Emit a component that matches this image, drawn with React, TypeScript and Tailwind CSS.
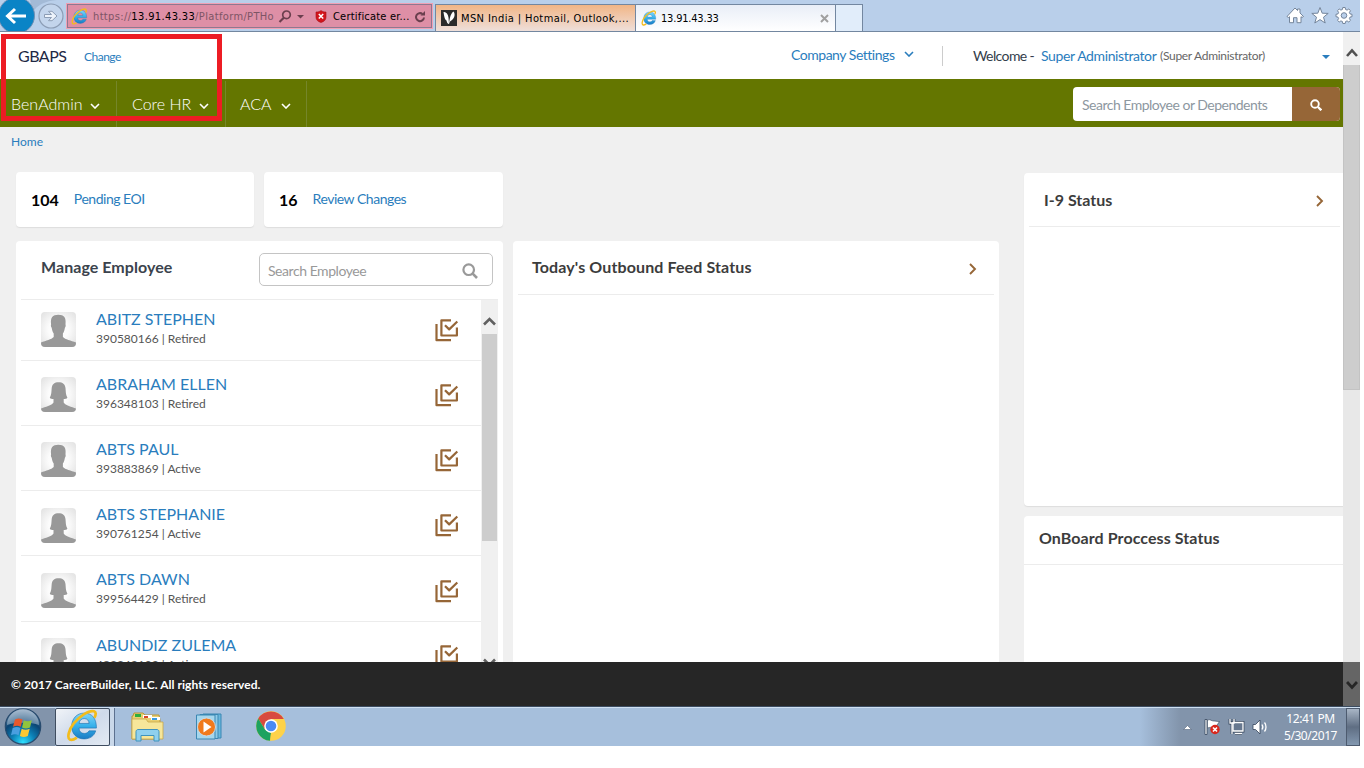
import React from 'react';

interface Employee {
  name: string;
  id: string;
  status: string;
  female: boolean;
}

const employees: Employee[] = [
  { name: 'ABITZ STEPHEN', id: '390580166', status: 'Retired', female: false },
  { name: 'ABRAHAM ELLEN', id: '396348103', status: 'Retired', female: true },
  { name: 'ABTS PAUL', id: '393883869', status: 'Active', female: false },
  { name: 'ABTS STEPHANIE', id: '390761254', status: 'Active', female: true },
  { name: 'ABTS DAWN', id: '399564429', status: 'Retired', female: true },
  { name: 'ABUNDIZ ZULEMA', id: '483242192', status: 'Active', female: true },
];

interface ChevronProps {
  className?: string;
  d?: string;
  width?: number;
  height?: number;
  strokeWidth?: number;
}

const Chevron: React.FC<ChevronProps> = ({ className = '', d = 'M1 1l4 4 4-4', width = 10, height = 6, strokeWidth = 1.6 }) => (
  <svg className={`shrink-0 ${className}`} width={width} height={height} viewBox={`0 0 ${width} ${height}`} fill="none" stroke="currentColor" strokeWidth={strokeWidth}>
    <path d={d} />
  </svg>
);

const IeLogo: React.FC<{ size: number; className?: string; id: string }> = ({ size, className, id }) => (
  <svg className={className} width={size} height={size} viewBox="0 0 32 32" fill="none">
    <defs>
      <linearGradient id={id} x1="0" y1="0" x2="0" y2="1">
        <stop offset="0" stopColor="#7fd6fa" />
        <stop offset="0.5" stopColor="#35b0ea" />
        <stop offset="1" stopColor="#1b7cc4" />
      </linearGradient>
    </defs>
    <path
      d="M29.5 18.5H12.6c.2 3.6 2.2 5.2 5.1 5.2 2.200 0 3.700-.8 4.600-2.500h6.500c-1.500 5-5.600 7.800-11.200 7.800C10.300 29 5.500 24 5.500 16.900 5.500 9.400 10.400 4 17.600 4c7.700 0 12 5.200 11.900 14.500ZM12.700 14h9.700c-.2-3-1.900-4.700-4.700-4.700-2.900 0-4.600 1.700-5 4.700Z"
      fill={`url(#${id})`}
      stroke="#1a6fb0"
      strokeWidth="0.6"
    />
    <path d="M27.500 8.500c1.800-3 1.800-5.500-.4-6.300C22.500.8 13 7 7.500 14 2.500 20.500.800 28 3.800 29.700c1.700.8 4.200-.2 6.700-2" stroke="#f3bc1c" strokeWidth="2.600" />
  </svg>
);

const BrowserBar = () => (
  <div className="h-8 flex bg-[#b9cfea] border-b border-[#7387a0] font-['DejaVu_Sans_Condensed','DejaVu_Sans',sans-serif] text-[11px] text-black overflow-hidden shrink-0">
    <svg width="67" height="31" viewBox="0 0 67 31" className="shrink-0">
      <path d="M30 0h27c-12 1-20 5-24 12z" fill="#a3bad6" />
      <circle cx="16.500" cy="15.500" r="18" fill="#0a84c6" stroke="#6f8fb3" />
      <path d="M26 16H8M15 9l-7.500 7 7.500 7" fill="none" stroke="#fff" strokeWidth="3" />
      <circle cx="51" cy="16" r="12" fill="#c3d5ec" stroke="#8c9db5" strokeWidth="1.200" />
      <path d="M44.500 14.500h7l-3-3.200h3.500l5 4.700-5 4.700h-3.500l3-3.200h-7z" fill="#edf3fb" stroke="#8c9db5" strokeWidth="1" />
    </svg>
    <div className="mt-1 w-[365px] h-6 shrink-0 flex items-center bg-[#de8fa6] border border-[#8f7890] outline-1 outline-[#f0a0b4] pl-[3px] pt-px">
      <IeLogo size={17} id="ieAddress" />
      <span className="ml-[5px] pt-px w-[182px] whitespace-nowrap text-[#7d5565] tracking-[0.36px]">
        https://<span className="text-black">13.91.43.33</span>/Platform/PTHo
      </span>
      <svg width="27" height="13" viewBox="0 0 27 13" className="ml-[3px] shrink-0" fill="none">
        <circle cx="8.500" cy="4.800" r="3.800" stroke="#6b3f4e" strokeWidth="1.700" />
        <path d="M5.800 7.800L1.500 12" stroke="#6b3f4e" strokeWidth="2.200" />
        <path d="M19 5h7l-3.500 3.500z" fill="#6b3f4e" />
      </svg>
      <svg width="12" height="13" viewBox="0 0 12 13" className="ml-[10px] shrink-0">
        <path d="M1 2c2 0 4-.5 5-1.500C7 1.500 9 2 11 2v5c0 3-2 4.500-5 5.500C3 11.500 1 10 1 7z" fill="#d3141c" stroke="#a50d14" strokeWidth=".6" />
        <path d="M3.800 4l4.400 4.600M8.200 4L3.800 8.600" stroke="#fff" strokeWidth="1.500" />
      </svg>
      <span className="ml-[6px] pt-px whitespace-nowrap tracking-[0.2px] w-[78px]">Certificate er...</span>
      <svg width="12" height="12" viewBox="0 0 12 12" fill="none" className="ml-[3px] shrink-0">
        <path d="M8.500 3A4 4 0 1 0 10 6.500" stroke="#6b3f4e" strokeWidth="2" />
        <path d="M6.500 4.500H11V0z" fill="#6b3f4e" />
      </svg>
    </div>
    <div className="mt-1 ml-[3px] w-[201px] h-[27px] shrink-0 flex items-center border border-b-0 border-[#7387a0] bg-linear-to-b from-[#f1b585] to-[#eedfda] pl-[5px]">
      <svg width="16" height="16" viewBox="0 0 16 16" className="shrink-0">
        <rect width="16" height="16" fill="#2b2b2b" />
        <path d="M2.500 2c2.500-.5 4.500 2 5 5.500l.5 6.500c-1.500 0-2-1.500-2.500-3.500C3.500 9.500 3 5 2.500 2z" fill="#fff" />
        <path d="M12.500 1.500c2.500 3 .5 8-3.500 10L8 14c.5-4 1-10 4.500-12.500z" fill="#fff" />
      </svg>
      <span className="ml-1 pt-0.5 whitespace-nowrap tracking-[0.4px]">MSN India | Hotmail, Outlook,...</span>
    </div>
    <div className="mt-1 w-[200px] h-[27px] shrink-0 flex items-center border-t border-r border-[#7387a0] bg-linear-to-b from-[#e9eef7] to-white pl-[5px] pr-[6px]">
      <IeLogo size={16} id="ieTab" />
      <span className="ml-1 pt-0.5 flex-1 tracking-[-0.2px]">13.91.43.33</span>
      <svg width="9" height="9" viewBox="0 0 9 9">
        <path d="M1 1l7 7M8 1L1 8" stroke="#a0a0a0" strokeWidth="2" />
      </svg>
    </div>
    <div className="mt-1 w-[27px] h-[27px] shrink-0 border-t border-r border-[#7387a0] bg-[#e1edfa]" />
    <svg width="70" height="20" viewBox="0 0 70 20" className="ml-auto mt-[6px] mr-[5px] shrink-0" fill="#fff" stroke="#74859b" strokeWidth="1">
      <path d="M2 10.500L10 2l2.500 2.500V3h2.500v4l3.500 3.500-1.500 1-1-.8v6h-4v-5H8.500v5h-4v-6l-1 .8z" />
      <path d="M35 1.500l2.200 5.700 6 .2-4.700 3.800 1.700 5.800-5.200-3.400-5.200 3.400 1.700-5.800-4.700-3.800 6-.2z" />
      <path d="M57.800 1.500h2.400l.4 2 1.500.6 1.700-1.100 1.700 1.700-1.100 1.700.6 1.500 2 .4v2.400l-2 .4-.6 1.500 1.100 1.700-1.700 1.700-1.700-1.100-1.500.6-.4 2h-2.400l-.4-2-1.500-.6-1.700 1.100-1.700-1.700 1.100-1.700-.6-1.500-2-.4V8.300l2-.4.600-1.500-1.100-1.700 1.700-1.700 1.700 1.100 1.500-.6z" />
      <circle cx="59" cy="9.500" r="2.800" fill="#b9cfea" />
    </svg>
  </div>
);

const TopHeader = () => (
  <div className="h-[47px] shrink-0 flex items-center bg-white text-sm whitespace-nowrap">
    <span className="ml-[18px] w-[66px] text-base text-[#1e2845] tracking-[-0.5px]">GBAPS</span>
    <span className="text-xs text-[#2a7dbd] pt-[3px] tracking-[-0.5px]">Change</span>
    <div className="ml-auto flex items-center">
      <span className="w-[104px] text-[#2a7dbd] tracking-[-0.47px] -mt-0.5">Company Settings</span>
      <Chevron className="ml-[9px] -mt-1 text-[#2a7dbd]" />
      <div className="ml-7 w-px h-5 bg-[#ccc]" />
      <span className="ml-[30px] w-[68px] text-[#333d4b] tracking-[-0.6px]">Welcome -</span>
      <span className="w-[119px] text-[#2a7dbd] tracking-[-0.38px]">Super Administrator</span>
      <span className="w-[162px] text-xs text-[#666] pt-px tracking-[-0.3px]">(Super Administrator)</span>
      <svg width="8" height="4" viewBox="0 0 8 4" className="mr-[13px] mt-0.5">
        <path d="M0 0h8L4 4z" fill="#2a7dbd" />
      </svg>
    </div>
  </div>
);

const MainNav = () => (
  <div className="h-12 shrink-0 flex items-center bg-[#647600] text-white">
    <div className="flex pt-0.5 h-full text-base font-light">
      <div className="w-[117px] pl-[11px] flex items-center gap-[7px] border-r border-[#75862a]">
        <span className="w-[72px]">BenAdmin</span>
        <Chevron className="mt-1" />
      </div>
      <div className="w-[109px] pl-[15px] flex items-center gap-[7px] border-r border-[#75862a]">
        <span className="w-[60px] whitespace-nowrap">Core HR</span>
        <Chevron className="mt-1" />
      </div>
      <div className="w-[81px] pl-[14px] flex items-center gap-[8px] border-r border-[#75862a]">
        <span className="w-[33px]">ACA</span>
        <Chevron className="mt-1" />
      </div>
    </div>
    <div className="ml-auto mr-[3px] mt-[2px] h-[34px] w-[267px] flex rounded-sm overflow-hidden bg-white">
      <span className="flex-1 pl-[9px] pt-[1px] leading-[34px] text-sm text-[#8d979f] whitespace-nowrap tracking-[-0.5px]">Search Employee or Dependents</span>
      <div className="w-12 bg-[#966637] flex items-center justify-center">
        <svg width="12" height="12" viewBox="0 0 12 12" fill="none" stroke="#fff" className="mt-0.5">
          <circle cx="5" cy="5" r="3.800" strokeWidth="1.900" />
          <path d="M8 8l3.300 3.300" strokeWidth="2.300" />
        </svg>
      </div>
    </div>
  </div>
);

const Avatar: React.FC<{ female: boolean }> = ({ female }) => (
  <div className="w-[35px] h-[35px] rounded-sm overflow-hidden bg-radial from-[#fcfcfc] from-40% to-[#e0e0e0]">
    <svg width="35" height="35" viewBox="0 0 35 35" fill="#999">
      {female ? (
        <path d="M0 35v-3.500C4 30 11 28.500 12.500 25.500V22c-1.500 0-3-.3-3.700-1.300 1.900-3.200 1.500-6.200 1.900-9.700C11.100 7 13.500 5.200 17.600 5.200s6.500 1.800 6.900 5.800c.4 3.500 0 6.500 1.900 9.700-.7 1-2.200 1.300-3.700 1.300v3.500C24.200 28.500 31 30 35 31.500V35z" />
      ) : (
        <path d="M0 35v-4.500c5-2 10.500-3 12.700-5.500v-3.500c-1.200-1.700-1.700-3.700-2-5.800-.8-.5-1-2-.6-3.400C9.300 5.500 11.500 2.700 17.300 2.700s8 2.800 7.200 9.600c.4 1.400.2 2.900-.6 3.400-.3 2-.8 4.100-2 5.800V25c2.200 2.500 8.100 3.500 13.100 5.500V35z" />
      )}
    </svg>
  </div>
);

const ChecklistIcon = () => (
  <svg width="24" height="23" viewBox="0 0 24 23" fill="none" stroke="#966637" strokeWidth="2.200" strokeLinejoin="round">
    <path d="M1.500 5v16.200H16" />
    <path d="M16 1.300H6.400v15.200h15.500V8.500" />
    <path d="M10 6.200l4.200 4.200L22.300 2.500" />
  </svg>
);

const EmployeeRow: React.FC<{ employee: Employee }> = ({ employee }) => (
  <div className="h-[65.2px] flex border-b border-[#ececec] pl-5 shrink-0">
    <div className="pt-[16.500px]">
      <Avatar female={employee.female} />
    </div>
    <div className="ml-5 pt-[13px] flex-1 whitespace-nowrap">
      <div className="text-base leading-5 text-[#2a7dbd]">{employee.name}</div>
      <div className="text-xs leading-5 text-[#555]">
        {employee.id} | {employee.status}
      </div>
    </div>
    <div className="pt-[23.300px] pr-[22px]">
      <ChecklistIcon />
    </div>
  </div>
);

const StatCard: React.FC<{ count: string; label: string; className: string }> = ({ count, label, className }) => (
  <div className={`h-[55px] bg-white rounded-sm shadow-[0_1px_1px_#ddd] flex items-center pl-[15px] ${className}`}>
    <span className="text-base font-bold text-black">{count}</span>
    <span className="ml-[15px] -mt-0.5 text-sm text-[#2a7dbd] tracking-[-0.48px]">{label}</span>
  </div>
);

const ManageEmployee = () => (
  <div className="w-[487px] bg-white rounded-t-sm px-[5px] flex flex-col overflow-hidden">
    <div className="h-[59px] shrink-0 flex border-b border-[#ececec] pl-5">
      <span className="pt-[14px] w-[218px] leading-6 text-base font-bold text-[#3b434d] tracking-[0.05px]">Manage Employee</span>
      <div className="mt-3 w-[234px] h-[33px] border border-[#c4c4c4] rounded-[5px] flex items-center pl-2 text-sm text-[#999]">
        <span className="flex-1 pt-[2px] tracking-[-0.45px]">Search Employee</span>
        <svg width="16" height="16" viewBox="0 0 16 16" fill="none" stroke="#999" className="mr-[14px] mt-[2px]">
          <circle cx="6.700" cy="6.700" r="5.300" strokeWidth="2.200" />
          <path d="M10.700 10.700l4.300 4.300" strokeWidth="2.600" />
        </svg>
      </div>
    </div>
    <div className="flex-1 flex min-h-0">
      <div className="flex-1 overflow-hidden">
        <div className="-mt-[4.400px] flex flex-col">
          {employees.map((employee) => (
            <EmployeeRow key={employee.id} employee={employee} />
          ))}
        </div>
      </div>
      <div className="w-[17px] bg-[#f0f0f0] flex flex-col items-center text-[#606060] pt-[17px] overflow-hidden">
        <Chevron width={13} height={9} d="M1 7.500l5.500-5.500L12 7.500" strokeWidth={2.6} />
        <div className="mt-[8px] w-[15px] h-[207px] shrink-0 bg-[#cdcdcd]" />
        <Chevron className="mt-[117px]" width={13} height={9} d="M1 1.500l5.500 5.500L12 1.500" strokeWidth={2.6} />
      </div>
    </div>
  </div>
);

const FeedStatus = () => (
  <div className="ml-[10px] w-[486px] bg-white rounded-t-sm px-[5px]">
    <div className="h-[54px] flex border-b border-[#ececec] pl-[14px] pr-[17px]">
      <span className="flex-1 pt-[14px] leading-6 text-base font-bold text-[#3c3c3c] tracking-[0.12px]">Today's Outbound Feed Status</span>
      <Chevron className="mt-[22px] text-[#966637]" width={8} height={12} d="M1 1l5 5-5 5" strokeWidth={1.9} />
    </div>
  </div>
);

const RightColumn = () => (
  <div className="ml-auto w-[319px] pt-[15px] flex flex-col text-[#3c3c3c]">
    <div className="h-[333px] shrink-0 bg-white rounded-l-sm shadow-[0_1px_1px_#ddd] pl-[5px] pr-[3px]">
      <div className="h-[54px] flex border-b border-[#ececec] pl-[15px] pr-[16px]">
        <span className="flex-1 pt-[15px] leading-6 text-base font-bold">I-9 Status</span>
        <Chevron className="mt-[22px] text-[#966637]" width={8} height={12} d="M1 1l5 5-5 5" strokeWidth={1.9} />
      </div>
    </div>
    <div className="mt-[10px] flex-1 bg-white rounded-tl-sm">
      <div className="h-[49px] border-b border-[#ececec] pl-[15px] pt-[10px] leading-6 text-base font-bold tracking-[0.08px]">OnBoard Proccess Status</div>
    </div>
  </div>
);

const PageScrollbar = () => (
  <div className="w-[17px] shrink-0 flex flex-col bg-[#e8e8e8]">
    <div className="h-[33px] bg-[#f0f0f0] flex justify-center pt-[16px] text-[#505050]">
      <Chevron width={12} height={10} d="M1 8l5-5.500L11 8" strokeWidth={2.6} />
    </div>
    <div className="h-[325px] bg-[#cdcdcd] border border-t-0 border-[#c3c3c3]" />
    <div className="mt-auto h-11 bg-[#656565] flex justify-center pt-[18px] text-[#262626]">
      <Chevron width={12} height={10} d="M1 2l5 5.500L11 2" strokeWidth={2.8} />
    </div>
  </div>
);

const Taskbar = () => (
  <div className="h-10 shrink-0 flex border-t border-[#3c4c60] bg-[#a6bfdc] font-['Noto_Sans',sans-serif]">
    <div className="flex-1 flex border-t border-[#cfe0f2]">
      <div className="w-[55px] bg-[#8294ab] flex items-center pl-1">
        <svg width="38" height="38" viewBox="0 0 38 38">
          <defs>
            <radialGradient id="orb" cx=".5" cy=".95" r=".95">
              <stop offset="0" stopColor="#2fe0ff" />
              <stop offset=".35" stopColor="#0c7fb5" />
              <stop offset=".65" stopColor="#0b4473" />
              <stop offset="1" stopColor="#7f9dbb" />
            </radialGradient>
          </defs>
          <circle cx="19" cy="18.500" r="17.700" fill="url(#orb)" stroke="#284b6e" strokeWidth="1.200" />
          <path d="M3 17A16 16 0 0 1 35 17C27 14 11 14 3 17z" fill="#fff" opacity=".35" />
          <path d="M11 11.500c3-1.500 5-1.300 7.500 0l-1.800 7.300c-2.500-1.300-4.700-1.200-7.700 0z" fill="#e8582b" />
          <path d="M19.800 12.200c2.500 1.300 5 1.300 8 0L26 19.500c-3 1.300-5.400 1.200-8 0z" fill="#91c43d" />
          <path d="M8.700 20c3-1.300 5.200-1.200 7.700 0l-1.800 7.300c-2.500-1.300-4.600-1.200-7.600 0z" fill="#4a9fe0" />
          <path d="M17.700 20.800c2.500 1.300 5 1.300 8 0l-1.900 7.200c-3 1.300-5.300 1.200-7.900 0z" fill="#fcc833" />
        </svg>
      </div>
      <div className="w-[55px] border border-[#3f4d60] rounded-xs bg-linear-to-br from-[#f1f4f8] via-[#cfdaea] to-[#e3eaf3] flex items-center pl-2.5 pb-1">
        <IeLogo size={33} id="ieTask" />
      </div>
      <div className="w-[5px] border-r border-[#5c7190] bg-[#c9d8ea]" />
      <svg width="36" height="34" viewBox="0 0 36 34" className="ml-[14px] mt-[3px]">
        <path d="M4 5l1-3h9l2 2h14l1 5v19H3V5z" fill="#e9cf70" stroke="#b8963a" />
        <path d="M6 3h6v3H6z" fill="#2fae3d" />
        <path d="M14 4h9v3h-9z" fill="#fff" />
        <path d="M15 5h4v2h-4z" fill="#d8472b" />
        <path d="M22 6h9v3h-9z" fill="#fff" />
        <path d="M23 7h5v2h-5z" fill="#3a9be0" />
        <path d="M3 8h14l2 3h15v17H3z" fill="#f6e69a" stroke="#c8a74a" strokeWidth=".8" />
        <path d="M7 30V20.500c0-1 1-2 2-2h19c1 0 2 1 2 2V30h-5v-5.500H12V30z" fill="#8fd0ee" stroke="#3f93bd" />
      </svg>
      <svg width="32" height="28" viewBox="0 0 32 28" className="ml-[30px] mt-[5px]">
        <path d="M8 1h18v24H8z" fill="#69b7dd" stroke="#3b87b3" />
        <path d="M5 1.500h18v24H5z" fill="#8fcbe8" stroke="#3b87b3" />
        <path d="M1.500 2H20v24H1.500z" fill="#a5d6ed" stroke="#3b87b3" />
        <circle cx="11.500" cy="14" r="9" fill="#f07a1d" stroke="#c9d8e4" />
        <path d="M8.500 8.500v11l8-5.500z" fill="#fff" />
      </svg>
      <svg width="30" height="30" viewBox="0 0 30 30" className="ml-[29px] mt-[3px]">
        <circle cx="15" cy="15" r="14.800" fill="#fdd24a" />
        <path d="M2.200 7.600A14.800 14.800 0 0 1 27.800 8H15l-6 10.500z" fill="#d84a3f" />
        <path d="M2.200 7.600L9 18.500 15 22l-1 7.800A14.800 14.800 0 0 1 2.200 7.600z" fill="#1da260" />
        <path d="M21 18.500L14.300 29.800 15 22z" fill="#fdd24a" />
        <circle cx="15" cy="15" r="6.800" fill="#fff" />
        <circle cx="15" cy="15" r="5.300" fill="#4a8af4" />
      </svg>
      <div className="ml-auto w-[135px] flex items-center bg-linear-to-r from-[#a6bfdc] to-[#8294ab] to-30% text-white">
        <svg width="9" height="5" viewBox="0 0 9 5" className="ml-[43px]">
          <path d="M.5 4.500L4.500.5l4 4z" fill="#fff" stroke="#55657c" strokeWidth=".6" />
        </svg>
        <svg width="66" height="18" viewBox="0 0 66 18" className="ml-[12px] shrink-0" fill="none">
          <path d="M1 1.500h2v15H1z" fill="#fff" stroke="#34445a" strokeWidth=".8" />
          <path d="M3.500 2c3-1 4 1 6 1s3 .5 6 .5L13 7l2 3c-3 .5-4-.5-6-.5s-3-.5-5.500.5z" fill="#fff" stroke="#34445a" strokeWidth=".6" />
          <circle cx="11" cy="11.500" r="4.700" fill="#d9271c" />
          <path d="M9 9.500l4 4M13 9.500l-4 4" stroke="#fff" strokeWidth="1.600" />
          <path d="M29 4.500h10v8.500H29z" fill="#67788f" stroke="#34445a" strokeWidth="2.800" />
          <path d="M26 1v4h4V1M28 5v11M31 15.500h7" stroke="#34445a" strokeWidth="2.800" />
          <path d="M29 4.500h10v8.500H29z" fill="#67788f" stroke="#fff" strokeWidth="1.300" />
          <path d="M26 1v4h4V1M28 5v11M31 15.500h7" stroke="#fff" strokeWidth="1.300" />
          <path d="M49 6.500h2.500L56 2v14l-4.500-4.500H49z" fill="#fff" stroke="#34445a" strokeWidth=".8" />
          <path d="M58 6.500c1 1.500 1 3.500 0 5M60.500 4.500c2 2.500 2 6.500 0 9" stroke="#fff" strokeWidth="1.300" />
        </svg>
      </div>
      <div className="w-[71px] bg-[#8294ab] text-white text-xs leading-[17px] text-center pt-[2px] tracking-[-0.45px] whitespace-nowrap">
        <div>12:41 PM</div>
        <div>5/30/2017</div>
      </div>
      <div className="w-[14px] border border-[#4d5b6f] bg-linear-to-b from-[#a9b6c6] via-[#5f6e83] to-[#8398b0]" />
    </div>
  </div>
);

const App: React.FC = () => {
  return (
    <div className="bg-white h-[768px] overflow-hidden">
      <div className="relative w-[1360px] h-[746px] flex flex-col font-[Lato,sans-serif]">
        <BrowserBar />
        <div className="h-[674px] flex shrink-0">
          <div className="flex-1 min-w-0 flex flex-col bg-[#f0f0f0]">
            <TopHeader />
            <MainNav />
            <div className="h-[31px] shrink-0 pl-[11px] pt-[5px] text-xs leading-5 text-[#2a7dbd]">Home</div>
            <div className="flex-1 min-h-0 flex pl-4">
              <div className="flex flex-col">
                <div className="flex pt-[14px] pb-[14px]">
                  <StatCard count="104" label="Pending EOI" className="w-[238px]" />
                  <StatCard count="16" label="Review Changes" className="ml-[10px] w-[239px]" />
                </div>
                <div className="flex-1 min-h-0 flex">
                  <ManageEmployee />
                  <FeedStatus />
                </div>
              </div>
              <RightColumn />
            </div>
            <div className="h-11 shrink-0 bg-[#262626] text-white text-xs font-bold leading-[46px] pl-[11px] tracking-[0.04px]">
              © 2017 CareerBuilder, LLC. All rights reserved.
            </div>
          </div>
          <PageScrollbar />
        </div>
        <Taskbar />
        <div className="absolute left-px top-[34px] w-[221px] h-[87px] border-[5px] border-[#ed1c24]" />
      </div>
    </div>
  );
};

export default App;
